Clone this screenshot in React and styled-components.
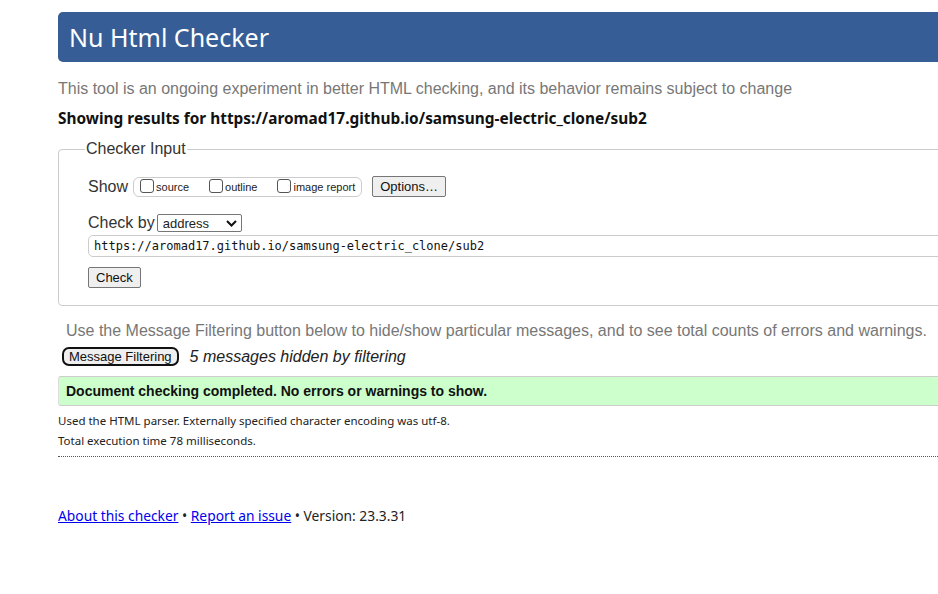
import React from "react";
import styled, { createGlobalStyle } from "styled-components";

const GlobalStyle = createGlobalStyle`
  html, body {
    margin: 0;
    padding: 0;
    background: #fff;
    overflow: hidden;
  }
  body {
    font-family: "Liberation Sans", Arial, sans-serif;
    color: #222;
  }
`;

const Page = styled.div`
  width: 960px;
  margin-left: 58px;
  padding-top: 12px;
`;

const Banner = styled.h1`
  margin: 0;
  height: 50px;
  background: #365d95;
  border-radius: 5px;
  color: #fff;
  font-family: "Noto Sans", "Open Sans", sans-serif;
  font-weight: 400;
  font-size: 25px;
  line-height: 50px;
  padding-left: 11px;
`;

const Intro = styled.p`
  margin: 17px 0 0;
  color: #777;
  font-size: 16px;
  line-height: 20px;
`;

const Results = styled.h2`
  margin: 9px 0 0;
  font-family: "Noto Sans", "Open Sans", sans-serif;
  font-weight: 700;
  font-size: 15.4px;
  line-height: 22px;
  color: #111;
`;

const Fieldset = styled.fieldset`
  margin: 10px 0 0;
  padding: 18px 29px 17px;
  border: 1px solid #ccc;
  border-radius: 4px;
`;

const Legend = styled.legend`
  margin-left: -3px;
  padding: 0 1px;
  font-size: 16px;
  color: #333;
`;

const Row = styled.div`
  display: flex;
  align-items: center;
  gap: ${(p) => p.$gap || 0}px;
  margin-top: ${(p) => p.$top || 0}px;
`;

const Label = styled.span`
  font-size: 16px;
  color: #333;
`;

const CheckGroup = styled.div`
  display: flex;
  align-items: center;
  flex-shrink: 0;
  height: 20px;
  box-sizing: border-box;
  padding: 0 6px;
  margin-left: 5px;
  border: 1px solid #ccc;
  border-radius: 6px;
  gap: 20px;
`;

const CheckItem = styled.label`
  display: flex;
  align-items: center;
  white-space: nowrap;
  font-size: 11px;
  color: #222;
`;

const Box = styled.span`
  flex-shrink: 0;
  width: 12px;
  height: 12px;
  border: 1px solid #555;
  border-radius: 3px;
  margin-right: 2px;
  margin-top: -2px;
  background: #fff;
`;

const Button = styled.button`
  flex-shrink: 0;
  font-family: "Liberation Sans", Arial, sans-serif;
  font-size: 13px;
  color: #111;
  height: 21px;
  padding: 0 7px;
  margin-left: ${(p) => p.$left || 0}px;
  background: #efefef;
  border: 1px solid #767676;
  border-radius: 2px;
  line-height: 18px;
  white-space: nowrap;
`;

const FilterButton = styled(Button)`
  border: 2px solid #111;
  border-radius: 7px;
  height: 19px;
  padding: 0 5px;
  line-height: 15px;
`;

const Select = styled.div`
  display: flex;
  align-items: center;
  justify-content: space-between;
  box-sizing: border-box;
  width: 85px;
  height: 18px;
  margin-left: 2px;
  padding: 0 4px 0 5px;
  border: 1px solid #767676;
  border-radius: 2px;
  font-size: 13px;
`;

const UrlInput = styled.div`
  height: 22px;
  margin-top: 3px;
  margin-right: -30px;
  border: 1px solid #ccc;
  border-radius: 5px;
  padding-left: 5px;
  font-family: "DejaVu Sans Mono", "Liberation Mono", monospace;
  font-size: 12px;
  line-height: 21px;
  color: #111;
  box-sizing: border-box;
`;

const Hint = styled.p`
  margin: 15px 0 0 8px;
  color: #777;
  font-size: 16px;
  line-height: 20px;
`;

const Hidden = styled.em`
  font-size: 16px;
  color: #222;
`;

const Success = styled.div`
  margin-top: 10px;
  height: 28px;
  background: #ccffcc;
  border-top: 1px solid #ccc;
  border-bottom: 1px solid #ccc;
  border-left: 1px solid #ddd;
  border-radius: 3px 0 0 3px;
  padding-left: 7px;
  font-weight: 700;
  font-size: 14px;
  line-height: 28px;
  color: #111;
`;

const Note = styled.p`
  margin: ${(p) => p.$top || 0}px 0 0;
  font-family: "Noto Sans", "Open Sans", sans-serif;
  font-size: 11.5px;
  line-height: 20px;
  color: #222;
`;

const Rule = styled.hr`
  margin: 5px 0 0;
  border: 0;
  border-top: 1px dotted #555;
`;

const Footer = styled.p`
  margin: 49px 0 0;
  font-family: "Noto Sans", "Open Sans", sans-serif;
  font-size: 13.8px;
  color: #222;
  line-height: 20px;
`;

const Link = styled.a`
  color: #0000ee;
  text-decoration: underline;
`;

const Chevron = () => (
  <svg width="11" height="7" viewBox="0 0 11 7">
    <path d="M1 1l4.5 4.5L10 1" fill="none" stroke="#111" strokeWidth="2" />
  </svg>
);

export default function App() {
  return (
    <Page>
      <GlobalStyle />
      <Banner>Nu Html Checker</Banner>
      <Intro>
        This tool is an ongoing experiment in better HTML checking, and its behavior remains subject to change
      </Intro>
      <Results>Showing results for https://aromad17.github.io/samsung-electric_clone/sub2</Results>
      <Fieldset>
        <Legend>Checker Input</Legend>
        <Row>
          <Label>Show</Label>
          <CheckGroup>
            <CheckItem><Box />source</CheckItem>
            <CheckItem><Box />outline</CheckItem>
            <CheckItem><Box />image report</CheckItem>
          </CheckGroup>
          <Button $left={10}>Options…</Button>
        </Row>
        <Row $top={17}>
          <Label>Check by</Label>
          <Select>
            address
            <Chevron />
          </Select>
        </Row>
        <UrlInput>https://aromad17.github.io/samsung-electric_clone/sub2</UrlInput>
        <Row $top={10}>
          <Button>Check</Button>
        </Row>
      </Fieldset>
      <Hint>
        Use the Message Filtering button below to hide/show particular messages, and to see total counts of errors and warnings.
      </Hint>
      <Row $gap={11} $top={6}>
        <FilterButton $left={4}>Message Filtering</FilterButton>
        <Hidden>5 messages hidden by filtering</Hidden>
      </Row>
      <Success>Document checking completed. No errors or warnings to show.</Success>
      <Note $top={5}>Used the HTML parser. Externally specified character encoding was utf-8.</Note>
      <Note>Total execution time 78 milliseconds.</Note>
      <Rule />
      <Footer>
        <Link href="#">About this checker</Link> • <Link href="#">Report an issue</Link> • Version: 23.3.31
      </Footer>
    </Page>
  );
}
